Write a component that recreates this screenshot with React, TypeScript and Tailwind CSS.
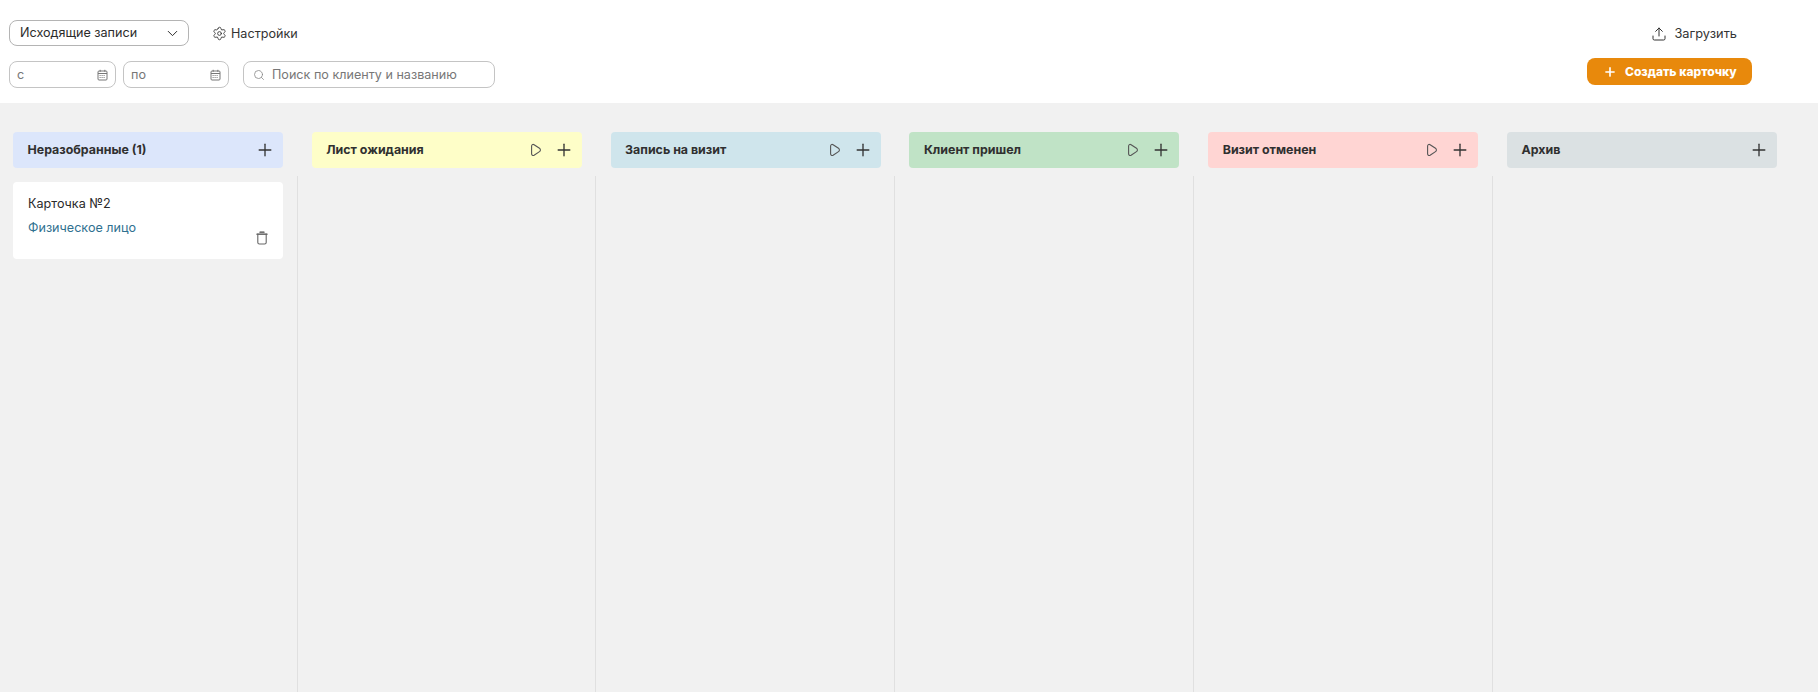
import React from "react";
import { ChevronDown, Settings, Search, Upload, Plus } from "lucide-react";

const cols = [
  { t: "Неразобранные (1)", bg: "bg-[#dce6fb]", play: false },
  { t: "Лист ожидания", bg: "bg-[#fefec8]", play: true },
  { t: "Запись на визит", bg: "bg-[#cfe5ec]", play: true },
  { t: "Клиент пришел", bg: "bg-[#c0e3c6]", play: true },
  { t: "Визит отменен", bg: "bg-[#ffd5d3]", play: true },
  { t: "Архив", bg: "bg-[#dbe1e3]", play: false },
];

function CalendarIcon() {
  return (
    <svg width="11" height="12" viewBox="0 0 11 12" fill="none" stroke="#777" strokeWidth="1">
      <rect x="1" y="2" width="9" height="9" rx="1" />
      <path d="M1 4.5h9M3.2 .8v2M7.8 .8v2" />
      <path d="M2.6 6.5h5.8M2.6 8.5h5.8" strokeDasharray="1 1" />
    </svg>
  );
}

function PlayIcon() {
  return (
    <svg width="12" height="14" viewBox="0 0 12 14" fill="none" stroke="#555" strokeWidth="1.1" strokeLinejoin="round">
      <path d="M1.6 3.2c0-1.5 1.2-2.2 2.5-1.5l5.4 3.6c1.2.8 1.2 2.5 0 3.3l-5.4 3.6c-1.3.7-2.5 0-2.5-1.5z" />
    </svg>
  );
}

function TrashIcon() {
  return (
    <svg width="12" height="14" viewBox="0 0 12 14" fill="none" stroke="#444" strokeWidth="1.1" strokeLinecap="round">
      <path d="M4 1.2h4" strokeWidth="1.3" />
      <path d="M1 3.2h10" strokeWidth="1.3" />
      <path d="M1.8 3.4v8c0 1 .6 1.6 1.6 1.6h5.2c1 0 1.6-.6 1.6-1.6v-8" stroke="#666" />
    </svg>
  );
}

function DateBox({ label, cls }: { label: string; cls: string }) {
  return (
    <div className={`flex h-[27px] items-center justify-between rounded-lg border border-[#c4c4c4] pl-[7px] pr-[7px] text-[12.6px] text-[#777] ${cls}`}>
      <span className="pt-[1px]">{label}</span>
      <CalendarIcon />
    </div>
  );
}

export default function App() {
  return (
    <div className="flex h-[692px] w-[1818px] flex-col overflow-hidden bg-[#f1f1f1] font-['Inter',sans-serif] text-[#2b2b2b]">
      <header className="flex h-[103px] shrink-0 justify-between bg-white pl-[9px] pr-[66px]">
        <div className="flex flex-col pt-5">
          <div className="flex items-center">
            <div className="flex h-[26px] w-[180px] items-center justify-between rounded-lg border border-[#b4b4b4] pl-[10px] pr-[7px] text-[12.6px]">
              <span className="pt-[1px]">Исходящие записи</span>
              <ChevronDown size={17} strokeWidth={1.4} />
            </div>
            <div className="ml-[23px] flex items-center gap-[4px] pt-[1px] text-[12.6px] text-[#333]">
              <Settings size={15} strokeWidth={1.4} />
              <span className="pt-[1px]">Настройки</span>
            </div>
          </div>
          <div className="mt-[15px] flex items-center">
            <DateBox label="с" cls="w-[107px]" />
            <DateBox label="по" cls="ml-[7px] w-[106px]" />
            <div className="ml-[14px] flex h-[27px] w-[252px] items-center gap-[7px] rounded-lg border border-[#c4c4c4] pl-[9px] text-[12.6px] text-[#777]">
              <Search size={12} strokeWidth={1.6} className="text-[#888]" />
              <span className="pt-[1px]">Поиск по клиенту и названию</span>
            </div>
          </div>
        </div>
        <div className="flex flex-col items-end pt-[24px]">
          <div className="mr-[15px] flex h-[20px] items-center gap-[7px] text-[12.8px] text-[#333]">
            <Upload size={16} strokeWidth={1.5} />
            <span>Загрузить</span>
          </div>
          <div className="mt-[14px] flex h-[27px] w-[165px] items-center justify-start rounded-lg bg-[#e8890c] pl-[16px] text-[12px] font-extrabold text-white">
            <Plus size={14} strokeWidth={2.8} />
            <span className="ml-[8px]">Создать карточку</span>
          </div>
        </div>
      </header>
      <main className="flex flex-1 pt-[29px]">
        {cols.map((c, i) => (
          <section key={c.t} className="flex w-[298.8px] shrink-0 flex-col">
            <div className="pl-[13px]">
              <div className={`flex h-[36px] w-[270px] items-center justify-between rounded pl-[14.5px] pr-[8px] text-[12.4px] font-bold text-[#303030] ${c.bg}`}>
                <span>{c.t}</span>
                <div className="flex items-center gap-[12px]">
                  {c.play && <PlayIcon />}
                  <Plus size={20} strokeWidth={1.6} className="text-[#333]" />
                </div>
              </div>
            </div>
            <div className={`mt-2 w-[297.6px] flex-1 pl-[13px] pt-[6px] ${i < 5 ? "border-r border-[#e0e0e0]" : ""}`}>
              {i === 0 && (
                <div className="relative h-[77px] w-[270px] rounded bg-white pl-[15px] pt-[13px] text-[12.6px]">
                  <div>Карточка №2</div>
                  <div className="mt-[5px] text-[#2f7190]">Физическое лицо</div>
                  <div className="absolute bottom-[14px] right-[15px]"><TrashIcon /></div>
                </div>
              )}
            </div>
          </section>
        ))}
      </main>
    </div>
  );
}
